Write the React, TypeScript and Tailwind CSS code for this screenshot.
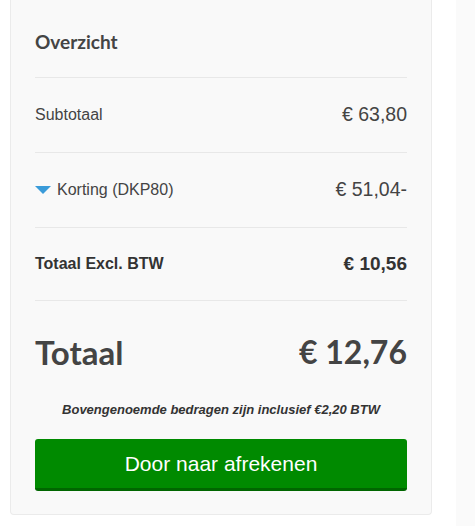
import React from 'react';

interface Line {
  label: string;
  amount: string;
  discount?: boolean;
}

const lines: Line[] = [
  { label: 'Subtotaal', amount: '€ 63,80' },
  { label: 'Korting (DKP80)', amount: '€ 51,04-', discount: true },
];

const App: React.FC = () => {
  return (
    <div className="min-h-[526px] bg-white flex">
      <div className="ml-[10px] w-[422px] h-[515px] bg-[#f9f9f9] border-x border-b border-[#ebebeb] rounded-b-[4px] px-6 text-[#444]">
        {/* Kop */}
        <div className="h-[78px] pt-[28px] border-b border-[#e8e8e8]">
          <h2 className="font-['Lato',sans-serif] font-bold text-[19px] leading-[28px] text-[#444]">Overzicht</h2>
        </div>

        {/* Regels */}
        {lines.map((line) => (
          <div key={line.label} className="h-[75px] flex items-center justify-between border-b border-[#e8e8e8] font-['Liberation_Sans',Arial,sans-serif]">
            <div className="flex items-center">
              {line.discount && (
                <svg width="16" height="9" viewBox="0 0 16 9" className="mr-[6px]">
                  <polygon points="0,0 16,0 8,8" fill="#3a9bd9" />
                </svg>
              )}
              <span className="text-[16px]">{line.label}</span>
            </div>
            <span className="text-[19.5px]">{line.amount}</span>
          </div>
        ))}

        <div className="h-[73px] flex items-center justify-between border-b border-[#e8e8e8] font-['Liberation_Sans',Arial,sans-serif] font-bold text-[#333]">
          <span className="text-[16px]">Totaal Excl. BTW</span>
          <span className="text-[19px]">€ 10,56</span>
        </div>

        {/* Totaal */}
        <div className="flex items-center justify-between pt-[30px] font-['Lato',sans-serif] font-bold text-[33px] leading-[42px] text-[#444]">
          <span>Totaal</span>
          <span className="text-[32px]">€ 12,76</span>
        </div>

        <p className="mt-[29px] text-center italic font-bold text-[13px] leading-[16px] text-[#333] font-['Liberation_Sans',Arial,sans-serif]">
          Bovengenoemde bedragen zijn inclusief €2,20 BTW
        </p>

        <button className="mt-[21px] w-full h-[52px] rounded-[3px] bg-[#008a00] border-b-[3px] border-[#006600] text-white text-[21px] font-['Liberation_Sans',Arial,sans-serif]">
          Door naar afrekenen
        </button>
      </div>
      <div className="ml-auto w-[19px] bg-[#fafafa]" />
    </div>
  );
};

export default App;
